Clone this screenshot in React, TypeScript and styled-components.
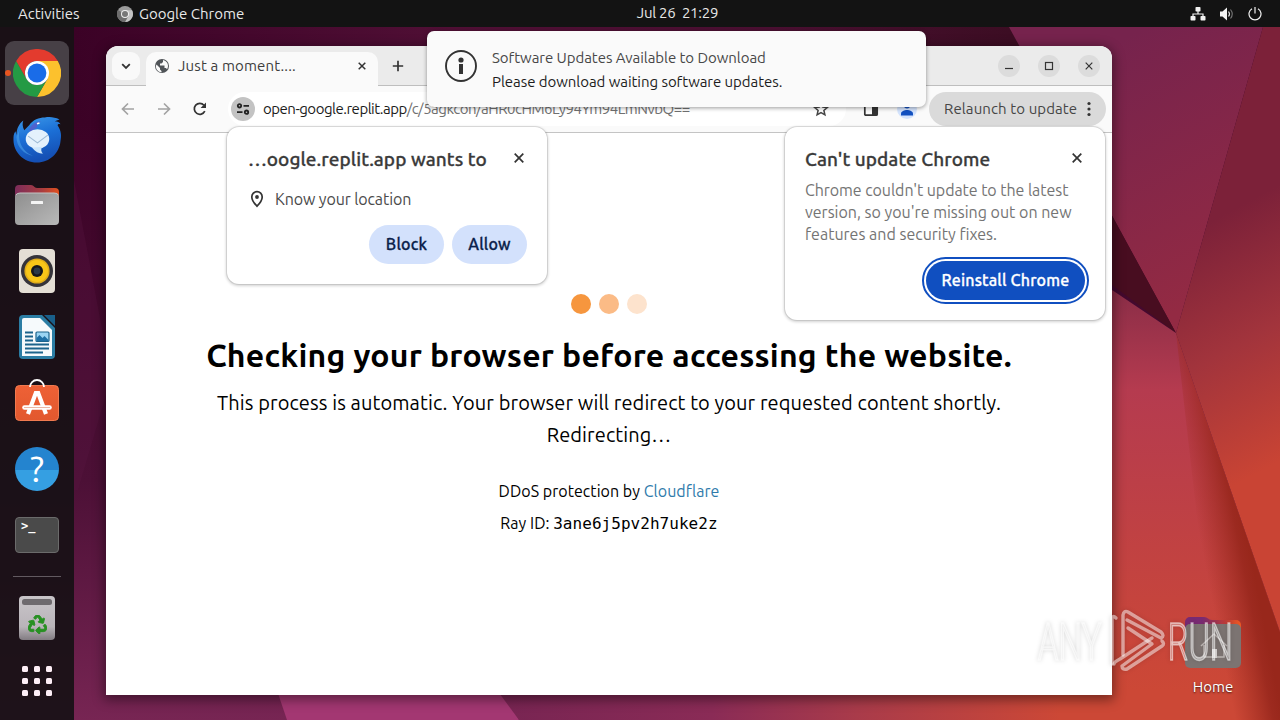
import type { ReactNode } from "react";
import { FaRecycle } from "react-icons/fa";
import styled, { createGlobalStyle } from "styled-components";

const GlobalStyle = createGlobalStyle`
  * {
    box-sizing: border-box;
  }

  body {
    margin: 0;
    overflow: hidden;
    font-family: Ubuntu, "Noto Sans", sans-serif;
  }
`;

/* ---------- wallpaper ---------- */

function Wallpaper() {
  return (
    <WallpaperSvg viewBox="0 0 1280 720" preserveAspectRatio="none">
      <defs>
        <linearGradient id="base" gradientUnits="userSpaceOnUse" x1="0" y1="120" x2="0" y2="720">
          <stop offset="0" stopColor="#3b0226" />
          <stop offset="0.6" stopColor="#4c1036" />
          <stop offset="1" stopColor="#772553" />
        </linearGradient>
        <linearGradient id="top" gradientUnits="userSpaceOnUse" x1="74" y1="0" x2="1010" y2="0">
          <stop offset="0" stopColor="#3b0226" />
          <stop offset="0.4" stopColor="#500f35" />
          <stop offset="0.75" stopColor="#4a0f31" />
          <stop offset="1" stopColor="#3c0d23" />
        </linearGradient>
        <linearGradient id="upper" gradientUnits="userSpaceOnUse" x1="1080" y1="60" x2="1200" y2="300">
          <stop offset="0" stopColor="#76234d" />
          <stop offset="1" stopColor="#932a43" />
        </linearGradient>
        <linearGradient id="right" gradientUnits="userSpaceOnUse" x1="1195" y1="230" x2="1310" y2="445">
          <stop offset="0" stopColor="#7c2139" />
          <stop offset="0.5" stopColor="#a2343c" />
          <stop offset="1" stopColor="#c94434" />
        </linearGradient>
        <linearGradient id="floor" gradientUnits="userSpaceOnUse" x1="480" y1="0" x2="1060" y2="0">
          <stop offset="0" stopColor="#762452" />
          <stop offset="0.4" stopColor="#8a2b56" />
          <stop offset="0.65" stopColor="#a93b4a" />
          <stop offset="1" stopColor="#cc4836" />
        </linearGradient>
        <linearGradient id="lower" gradientUnits="userSpaceOnUse" x1="0" y1="290" x2="0" y2="690">
          <stop offset="0" stopColor="#8a2d47" />
          <stop offset="0.25" stopColor="#b53b4f" />
          <stop offset="1" stopColor="#cc4836" />
        </linearGradient>
        <linearGradient id="fold" gradientUnits="userSpaceOnUse" x1="1204" y1="560" x2="1250" y2="551">
          <stop offset="0" stopColor="#a02c20" stopOpacity="0" />
          <stop offset="0.8" stopColor="#98271c" stopOpacity="0.9" />
          <stop offset="1" stopColor="#98271b" />
        </linearGradient>
      </defs>
      <rect width="1280" height="720" fill="url(#base)" />
      <path d="M74 27H1010L1060 120H74z" fill="url(#top)" />
      <path d="M74 180L106 350V395L78 490H74z" fill="#5a1743" opacity="0.3" />
      <path d="M260 640H480L519 720H287z" fill="#a33772" />
      <path d="M460 640H1176V720H519z" fill="url(#floor)" />
      <path d="M1009 27H1263L1176 333z" fill="url(#upper)" />
      <path d="M1263 27H1280V632L1176 333z" fill="url(#right)" />
      <path d="M1060 120L1176 333L1060 246z" fill="#480d20" />
      <path d="M1060 255L1176 333L1280 632V720H1060z" fill="url(#lower)" />
      <path d="M1176 333L1280 632V720H1220z" fill="url(#fold)" />
    </WallpaperSvg>
  );
}

/* ---------- dock icons ---------- */

const ChromeLogo = () => (
  <svg width="48" height="48" viewBox="0 0 48 48">
    <path d="M24 12H44.8A24 24 0 0 1 24 48L34.4 30z" fill="#fcc12d" />
    <path d="M34.4 30L24 48A24 24 0 0 1 3.2 12L13.6 30a12 12 0 0 0 20.8 0z" fill="#249a44" />
    <path d="M3.2 12A24 24 0 0 1 44.8 12H24a12 12 0 0 0-10.4 18z" fill="#e33b2e" />
    <circle cx="24" cy="24" r="12" fill="#fff" />
    <circle cx="24" cy="24" r="9.4" fill="#1a6ce8" />
  </svg>
);

const Thunderbird = () => (
  <svg width="50" height="48" viewBox="0 -1.5 50 49">
    <defs>
      <linearGradient id="bird" x1="0" y1="0" x2="0.3" y2="1">
        <stop offset="0" stopColor="#3d9bea" />
        <stop offset="0.5" stopColor="#1b6fd6" />
        <stop offset="1" stopColor="#1550b5" />
      </linearGradient>
    </defs>
    <path
      d="M11 4C10 7 10 10 12 14L17 9C21 3 27 1 33 1C39 0 43 1 48 3C46 4 44 4 43 5C46 5 48 6 49 8C47 7 46 8 46 9C50 15 50 20 49 25C48 37 38 47 25 47C11 47 1 36 1 24C1 20 1 18 3 15L4 19C4 12 7 7 11 4z"
      fill="url(#bird)"
    />
    <path d="M17 13C20 8 24 5 29 5C26 7 25 9 25 11L18 16z" fill="#6b4fc4" opacity="0.6" />
    <path d="M8 11C4 22 9 36 21 40C12 39 4 31 4 21z" fill="#5cb4f5" opacity="0.45" />
    <ellipse cx="25.500" cy="23" rx="12" ry="10" fill="#e4f1fc" />
    <path d="M16 20L25.500 27L36 19" stroke="#9dbad4" strokeWidth="1.1" fill="none" />
    <path d="M20 32C23 36 27 38 31 38C29 36 29 34 30 31z" fill="#cde6fb" />
    <path d="M25 7.500l2.500-.8" stroke="#fff" strokeWidth="1.6" />
  </svg>
);

const Files = () => (
  <svg width="46" height="42" viewBox="0 0 46 42">
    <defs>
      <linearGradient id="folderTab" x1="0" x2="1">
        <stop offset="0" stopColor="#7c2c5a" />
        <stop offset="0.6" stopColor="#a83c40" />
        <stop offset="1" stopColor="#e2511f" />
      </linearGradient>
      <linearGradient id="folderFront" x1="0" y1="0" x2="1" y2="1">
        <stop offset="0" stopColor="#8e8e8e" />
        <stop offset="1" stopColor="#b9b9b9" />
      </linearGradient>
    </defs>
    <path d="M1 16V5a4 4 0 0 1 4-4h12c3 0 3 3 6 3h18a4 4 0 0 1 4 4v8z" fill="url(#folderTab)" />
    <rect x="1" y="9" width="44" height="32" rx="4" fill="url(#folderFront)" />
    <path d="M2 11q1-2 4-2h34q4 0 4 2" stroke="#c3c3c3" fill="none" />
    <rect x="17" y="17" width="12" height="3" rx="0.5" fill="#f4f4f4" />
  </svg>
);

const Rhythmbox = () => (
  <svg width="38" height="46" viewBox="0 0 38 46">
    <rect x="1" y="1" width="36" height="44" rx="4" fill="#e4dfd5" />
    <circle cx="19" cy="23" r="16" fill="#35343a" />
    <circle cx="19" cy="23" r="12.6" fill="#e0ad19" />
    <circle cx="19" cy="23" r="11" fill="#f8c618" />
    <circle cx="19" cy="23" r="6" fill="#17181a" />
    <circle cx="19" cy="23" r="3.4" fill="#2a3848" />
  </svg>
);

const Writer = () => (
  <svg width="38" height="46" viewBox="0 0 38 46">
    <path d="M5 1H24L37 14V41a4 4 0 0 1-4 4H5a4 4 0 0 1-4-4V5a4 4 0 0 1 4-4z" fill="#2b7da4" />
    <path d="M26 1H37V12z" fill="#195f8a" />
    <path d="M6 4H22L34 16V42H4V6a2 2 0 0 1 2-2z" fill="#f6fafc" />
    <g stroke="#1c648c" strokeWidth="2">
      <path d="M7 18.5h8M7 22.5h8M7 26.5h8M7 30.5h24M7 34.5h24M7 38.5h18" />
    </g>
    <rect x="18" y="18" width="13" height="9.5" rx="1" fill="#9bd5f3" stroke="#1c648c" strokeWidth="1.2" />
    <path d="M18.5 27v-3l3-3 3 3 2-2 4 4v1z" fill="#1f70a5" />
  </svg>
);

const Software = () => (
  <svg width="46" height="50" viewBox="0 0 46 50">
    <defs>
      <linearGradient id="bag" x1="0" x2="0" y1="0" y2="1">
        <stop offset="0" stopColor="#ee6136" />
        <stop offset="1" stopColor="#e2582e" />
      </linearGradient>
    </defs>
    <rect x="1.500" y="7.500" width="43" height="35" rx="4" fill="url(#bag)" stroke="#f07a50" />
    <path d="M16 9a7 7 0 0 1 14 0" stroke="#fff" strokeWidth="1.8" fill="none" />
    <path d="M14 36L21.800 15h2.400L32 36" stroke="#fff" strokeWidth="4.2" fill="none" />
    <path d="M10.500 29.500h25" stroke="#fff" strokeWidth="4.600" strokeLinecap="round" />
    <path d="M10 29.500h26" stroke="#e9a58e" strokeWidth="0.8" />
  </svg>
);

const Help = () => (
  <HelpBadge>
    <span>?</span>
  </HelpBadge>
);

const Terminal = () => (
  <TerminalBox>
    <span>&gt;_</span>
  </TerminalBox>
);

const Trash = () => (
  <TrashBin>
    <TrashLid />
    <FaRecycle size={19} color="#279022" stroke="#279022" strokeWidth={26} />
  </TrashBin>
);

const AppGrid = () => (
  <svg width="30" height="30" viewBox="0 0 30 30" fill="#fdeef6">
    {[0, 12, 24].map((y) =>
      [0, 12, 24].map((x) => <rect key={`${x}-${y}`} x={x} y={y} width="6" height="6" rx="1.5" />)
    )}
  </svg>
);

/* ---------- small icons ---------- */

const CloseIcon = ({ size = 10, weight = 1.7 }: { size?: number; weight?: number }) => (
  <svg width={size} height={size} viewBox={`0 0 ${size} ${size}`}>
    <path d={`M.7 .7L${size - 0.7} ${size - 0.7}M${size - 0.7} .7L.7 ${size - 0.7}`} stroke="#333" strokeWidth={weight} />
  </svg>
);

const GlobeIcon = () => (
  <svg width="16" height="16" viewBox="0 0 16 16">
    <circle cx="8" cy="8" r="7" fill="#505458" />
    <path
      d="M2.500 6.500L6 10v1.500L7.500 13v1.200C4 14 1.800 11 1.900 8zM9 2v2L7.500 5.500H6V7.500h4.500V10h1.500l1 1.200A6 6 0 0 0 9 2z"
      fill="#fafafa"
    />
  </svg>
);

const ArrowIcon = ({ flip }: { flip?: boolean }) => (
  <svg width="14" height="14" viewBox="0 0 14 14" fill="none" stroke="#a3a3a3" strokeWidth="1.7">
    {flip ? <path d="M1 7h11M7 1.500L12.500 7L7 12.500" /> : <path d="M13 7H2M7 1.500L1.500 7L7 12.500" />}
  </svg>
);

const ReloadIcon = () => (
  <svg width="14" height="14" viewBox="0 0 14 14">
    <path d="M11.800 9.200A5.500 5.500 0 1 1 11 3.200" fill="none" stroke="#333" strokeWidth="1.700" />
    <path d="M13 .5V6H7.600z" fill="#333" />
  </svg>
);

const TuneIcon = () => (
  <svg width="14" height="12" viewBox="0 0 14 12" fill="none" stroke="#222" strokeWidth="1.800">
    <circle cx="3.500" cy="2.800" r="1.700" />
    <path d="M7.500 2.800H13M1 9.200H6.500" />
    <circle cx="10.500" cy="9.200" r="1.700" />
  </svg>
);

const PinIcon = () => (
  <svg width="14" height="18" viewBox="0 0 14 18">
    <path
      d="M7 1.700a5.200 5.200 0 0 0-5.200 5.200C1.800 10.800 7 16.200 7 16.200s5.200-5.400 5.200-9.300A5.200 5.200 0 0 0 7 1.700z"
      fill="none"
      stroke="#333"
      strokeWidth="1.700"
    />
    <circle cx="7" cy="7" r="1.900" fill="#333" />
  </svg>
);

/* ---------- app ---------- */

interface DockEntry {
  name: string;
  icon: ReactNode;
  active?: boolean;
}

const dockEntries: DockEntry[] = [
  { name: "chrome", icon: <ChromeLogo />, active: true },
  { name: "thunderbird", icon: <Thunderbird /> },
  { name: "files", icon: <Files /> },
  { name: "rhythmbox", icon: <Rhythmbox /> },
  { name: "writer", icon: <Writer /> },
  { name: "software", icon: <Software /> },
  { name: "help", icon: <Help /> },
  { name: "terminal", icon: <Terminal /> },
];

function MenuBar() {
  return (
    <TopBar>
      <Activities>Activities</Activities>
      <AppMenu>
        <svg width="16" height="16" viewBox="0 0 16 16">
          <circle cx="8" cy="8" r="8" fill="#9b9b9b" />
          <path d="M8 4.200h7A8 8 0 0 1 8 16l3.500-6z" fill="#c4c4c4" />
          <path d="M1 4A8 8 0 0 0 8 16l3.300-6z" fill="#6d6d6d" />
          <circle cx="8" cy="8" r="4" fill="#eee" />
          <circle cx="8" cy="8" r="3" fill="#777" />
        </svg>
        Google Chrome
      </AppMenu>
      <Clock>Jul 26&nbsp; 21:29</Clock>
      <Tray>
        <svg width="16" height="14" viewBox="0 0 16 14">
          <path d="M8 3v4M3 10V7h10v3" stroke="#f2f2f2" fill="none" strokeWidth="1.200" />
          <g fill="#f2f2f2">
            <rect x="5.500" y="0" width="5" height="4.500" rx="0.800" />
            <rect x="0.500" y="9" width="5" height="4.500" rx="0.800" />
            <rect x="10.500" y="9" width="5" height="4.500" rx="0.800" />
          </g>
        </svg>
        <svg width="16" height="14" viewBox="0 0 16 14">
          <path d="M1 4.500h2.500L8 .5v13L3.500 9.500H1z" fill="#f2f2f2" />
          <path d="M9.500 4.500q2 2.500 0 5" stroke="#ddd" fill="none" strokeWidth="1.200" />
          <path d="M11.500 2.500q3.500 4.500 0 9" stroke="#777" fill="none" strokeWidth="1.100" />
        </svg>
        <svg width="14" height="14" viewBox="0 0 14 14" stroke="#f2f2f2" fill="none" strokeWidth="1.200">
          <path d="M4 1.700a6 6 0 1 0 6 0M7 0v6.500" />
        </svg>
      </Tray>
    </TopBar>
  );
}

function BrowserWindow() {
  return (
    <Window>
      <TabStrip>
        <TabSearch>
          <svg width="10" height="7" viewBox="0 0 10 7">
            <path d="M1.200 1.200L5 5L8.800 1.200" stroke="#333" strokeWidth="1.800" fill="none" />
          </svg>
        </TabSearch>
        <Tab>
          <GlobeIcon />
          <TabTitle>Just a moment....</TabTitle>
          <CloseIcon size={8} weight={1.5} />
        </Tab>
        <NewTab>
          <svg width="12" height="12" viewBox="0 0 12 12">
            <path d="M6 .8V11.200M.8 6H11.200" stroke="#333" strokeWidth="1.700" />
          </svg>
        </NewTab>
        <WindowControls>
          <ControlButton>
            <svg width="10" height="10" viewBox="0 0 10 10">
              <path d="M1 7.500h8" stroke="#333" strokeWidth="1.200" />
            </svg>
          </ControlButton>
          <ControlButton>
            <svg width="10" height="10" viewBox="0 0 10 10">
              <rect x="1.500" y="1.500" width="7" height="7" stroke="#333" strokeWidth="1.200" fill="none" />
            </svg>
          </ControlButton>
          <ControlButton>
            <CloseIcon size={8} weight={1.2} />
          </ControlButton>
        </WindowControls>
      </TabStrip>
      <Toolbar>
        <NavButtons>
          <ArrowIcon />
          <ArrowIcon flip />
          <ReloadIcon />
        </NavButtons>
        <Omnibox>
          <SiteInfo>
            <TuneIcon />
          </SiteInfo>
          <Host>open-google.replit.app</Host>
          <Path>/c/5agkcoh/aHR0cHM6Ly94Ym94LmNvbQ==</Path>
          <svg width="16" height="16" viewBox="0 0 16 16">
            <path
              d="M8 1.800l1.800 4.200 4.500.4-3.400 3 1 4.400L8 11.500l-3.900 2.300 1-4.400-3.400-3 4.500-.4z"
              fill="none"
              stroke="#444"
              strokeWidth="1.500"
            />
          </svg>
        </Omnibox>
        <SidePanel>
          <svg width="16" height="16" viewBox="0 0 16 16">
            <rect x="1.800" y="1.800" width="12.400" height="12.400" rx="1" fill="none" stroke="#333" strokeWidth="1.700" />
            <path d="M9 2h5v12H9z" fill="#333" />
          </svg>
        </SidePanel>
        <Profile>
          <svg width="12" height="14" viewBox="0 0 12 14" fill="#1250c0">
            <circle cx="6" cy="3.500" r="3" />
            <path d="M0 13.500v-2C0 9.500 3.500 8 6 8s6 1.500 6 3.500v2z" />
          </svg>
        </Profile>
        <Relaunch>
          Relaunch to update
          <svg width="4" height="16" viewBox="0 0 4 16" fill="#333">
            <circle cx="2" cy="2.500" r="1.600" />
            <circle cx="2" cy="8" r="1.600" />
            <circle cx="2" cy="13.500" r="1.600" />
          </svg>
        </Relaunch>
      </Toolbar>
      <Page>
        <Dots>
          <Dot $color="#f6963e" />
          <Dot $color="#fbbb86" />
          <Dot $color="#fde3cd" />
        </Dots>
        <Heading>Checking your browser before accessing the website.</Heading>
        <Message>
          This process is automatic. Your browser will redirect to your requested content shortly.
        </Message>
        <Message>Redirecting…</Message>
        <Footnotes>
          <Footnote>
            DDoS protection by <a>Cloudflare</a>
          </Footnote>
          <Footnote>
            Ray ID: <code>3ane6j5pv2h7uke2z</code>
          </Footnote>
        </Footnotes>
      </Page>
    </Window>
  );
}

function PermissionPrompt() {
  return (
    <PermissionBubble>
      <BubbleHeader>
        <BubbleTitle>…oogle.replit.app wants to</BubbleTitle>
        <CloseIcon />
      </BubbleHeader>
      <PermissionRow>
        <PinIcon />
        Know your location
      </PermissionRow>
      <Actions>
        <TonalButton>Block</TonalButton>
        <TonalButton>Allow</TonalButton>
      </Actions>
    </PermissionBubble>
  );
}

function UpdatePrompt() {
  return (
    <UpdateBubble>
      <BubbleHeader>
        <BubbleTitle>Can't update Chrome</BubbleTitle>
        <CloseIcon />
      </BubbleHeader>
      <UpdateText>
        <span>Chrome couldn't update to the latest</span>
        <span>version, so you're missing out on new</span>
        <span>features and security fixes.</span>
      </UpdateText>
      <Actions>
        <PrimaryButton>Reinstall Chrome</PrimaryButton>
      </Actions>
    </UpdateBubble>
  );
}

function Notification() {
  return (
    <Toast>
      <svg width="34" height="34" viewBox="0 0 34 34">
        <circle cx="17" cy="17" r="15" fill="none" stroke="#333" strokeWidth="1.900" />
        <circle cx="17" cy="11" r="2.600" fill="#333" />
        <rect x="15" y="15" width="4" height="10" fill="#333" />
      </svg>
      <ToastText>
        <ToastTitle>Software Updates Available to Download</ToastTitle>
        <ToastBody>Please download waiting software updates.</ToastBody>
      </ToastText>
    </Toast>
  );
}

function HomeFolder() {
  return (
    <HomeItem>
      <svg width="58" height="54" viewBox="0 0 58 54">
        <defs>
          <linearGradient id="homeTab" x1="0" x2="1">
            <stop offset="0.3" stopColor="#782a72" />
            <stop offset="0.7" stopColor="#b83a3c" />
            <stop offset="1" stopColor="#ee5a22" />
          </linearGradient>
        </defs>
        <path d="M1 18V6a5 5 0 0 1 5-5h14c4 0 4 3 8 3h24a5 5 0 0 1 5 5v9z" fill="url(#homeTab)" />
        <rect x="1" y="8" width="56" height="44" rx="5" fill="#7c7472" />
        <path d="M17 30L30 18L43 30M20 29v12h20V29" stroke="#bcb6b4" strokeWidth="1.600" fill="none" />
        <rect x="28" y="33" width="5" height="9" fill="#d8d4d3" />
      </svg>
      <span>Home</span>
    </HomeItem>
  );
}

function Watermark() {
  return (
    <WatermarkSvg width="240" height="90" viewBox="0 0 240 90">
      <g fill="none" stroke="#fff" strokeOpacity="0.5" strokeWidth="3.400" strokeLinejoin="round" strokeLinecap="round">
        <path d="M82 59V13q1-3 4 0" />
        <path d="M93 50V10q1-5 5-3L131 27q4 4 0 6L97 15" />
        <path d="M132 36q3 3 0 5L97 64q-5 1-5-3L122 39L98 23" />
        <path d="M122 33L90 54q-6 3-6 5" />
      </g>
      <g
        transform="scale(0.65 1)"
        fontFamily="Roboto, sans-serif"
        fontSize="52"
        fontWeight="300"
        fill="#fff"
        fillOpacity="0.35"
        stroke="#fff"
        strokeOpacity="0.55"
        strokeWidth="1.600"
      >
        <text x="12" y="55" textLength="98" lengthAdjust="spacingAndGlyphs">
          ANY
        </text>
        <text x="212" y="55" textLength="100" lengthAdjust="spacingAndGlyphs">
          RUN
        </text>
      </g>
    </WatermarkSvg>
  );
}

function App() {
  return (
    <Desktop>
      <GlobalStyle />
      <Wallpaper />
      <MenuBar />
      <Workspace>
        <Dock>
          {dockEntries.map((entry) => (
            <DockItem key={entry.name}>
              <DockTile $active={entry.active}>{entry.icon}</DockTile>
            </DockItem>
          ))}
          <DockSeparator />
          <DockItem>
            <Trash />
          </DockItem>
          <GridItem>
            <AppGrid />
          </GridItem>
        </Dock>
      </Workspace>
      <HomeFolder />
      <BrowserWindow />
      <PermissionPrompt />
      <UpdatePrompt />
      <Notification />
      <Watermark />
    </Desktop>
  );
}

const Desktop = styled.div`
  position: relative;
  display: flex;
  flex-direction: column;
  width: 1280px;
  height: 720px;
  overflow: hidden;
  background: #3b0226;
`;

const WallpaperSvg = styled.svg`
  position: absolute;
  inset: 0;
  width: 1280px;
  height: 720px;
`;

const TopBar = styled.header`
  position: relative;
  display: grid;
  grid-template-columns: 117px 510px 101px 1fr;
  align-items: center;
  height: 27px;
  background: #131313;
  color: #e8e8e8;
  font-size: 15px;
  line-height: 20px;
`;

const Activities = styled.span`
  padding-left: 18px;
`;

const AppMenu = styled.div`
  display: flex;
  align-items: center;
  gap: 6px;
`;

const Clock = styled.span`
  padding-bottom: 1px;
  text-align: center;
  white-space: nowrap;
  letter-spacing: -0.25px;
`;

const Tray = styled.div`
  display: flex;
  align-items: center;
  justify-content: flex-end;
  gap: 13px;
  padding-right: 18px;
`;

const Workspace = styled.div`
  position: relative;
  display: flex;
  flex: 1;
`;

const Dock = styled.nav`
  display: flex;
  flex-direction: column;
  align-items: center;
  width: 74px;
  height: 693px;
  padding-top: 13px;
  background: rgba(24, 17, 21, 0.93);
`;

const DockItem = styled.div`
  display: flex;
  align-items: center;
  justify-content: center;
  width: 74px;
  height: 66px;
`;

const DockTile = styled.div<{ $active?: boolean }>`
  position: relative;
  display: flex;
  align-items: center;
  justify-content: center;
  width: 64px;
  height: 64px;
  border-radius: 9px;
  background: ${({ $active }) => ($active ? "#474046" : "transparent")};

  &::before {
    content: "";
    position: absolute;
    left: 0;
    width: 6px;
    height: 6px;
    border-radius: 50%;
    background: ${({ $active }) => ($active ? "#e95420" : "transparent")};
  }
`;

const DockSeparator = styled.div`
  width: 48px;
  height: 1px;
  margin: 8px 0;
  background: #625a60;
`;

const GridItem = styled(DockItem)`
  height: 60px;
`;

const HelpBadge = styled.div`
  display: flex;
  align-items: center;
  justify-content: center;
  width: 44px;
  height: 44px;
  border-radius: 50%;
  background: linear-gradient(#2484cf 0 52%, #359fe2 52%);
  color: #fff;
  font-size: 36px;
  line-height: 44px;
`;

const TerminalBox = styled.div`
  width: 44px;
  height: 36px;
  padding: 0 5px;
  border: 1px solid #6b6b6b;
  border-radius: 4px;
  background: #4a4a4a;
  color: #fff;
  font: bold 12px/16px "DejaVu Sans Mono", monospace;
`;

const TrashBin = styled.div`
  display: flex;
  flex-direction: column;
  align-items: center;
  justify-content: space-between;
  width: 36px;
  height: 44px;
  padding: 3px 0 6px;
  border-radius: 4px;
  background: linear-gradient(#c9c5c9, #b9b4b9 70%, #827c82);
`;

const TrashLid = styled.div`
  width: 30px;
  height: 6px;
  border-radius: 2.5px;
  background: #6e6a6e;
`;

const Window = styled.main`
  position: absolute;
  left: 106px;
  top: 46px;
  display: flex;
  flex-direction: column;
  width: 1006px;
  height: 649px;
  border-radius: 12px 12px 0 0;
  background: #fff;
  box-shadow: 0 3px 12px 2px rgba(0, 0, 0, 0.42);
`;

const TabStrip = styled.div`
  display: flex;
  height: 40px;
  padding: 6px 12px 0 6px;
  border-bottom: 1px solid #bebebe;
  border-radius: 12px 12px 0 0;
  background: #ebebeb;
`;

const TabSearch = styled.div`
  display: flex;
  align-items: center;
  justify-content: center;
  width: 28px;
  height: 28px;
  border-radius: 9px;
  background: #f9f9f9;
`;

const Tab = styled.div`
  display: flex;
  align-items: center;
  width: 232px;
  height: 34px;
  margin-left: 6px;
  padding: 0 12px 6px 8px;
  border-radius: 10px 10px 0 0;
  background: #fafafa;
`;

const TabTitle = styled.span`
  flex: 1;
  padding-left: 8px;
  color: #3d3d3d;
  font-size: 15px;
  line-height: 20px;
  letter-spacing: 0.15px;
`;

const NewTab = styled.div`
  display: flex;
  align-items: center;
  justify-content: center;
  width: 28px;
  height: 28px;
  margin-left: 6px;
`;

const WindowControls = styled.div`
  display: flex;
  gap: 18px;
  margin-left: auto;
  padding-top: 3px;
`;

const ControlButton = styled.div`
  display: flex;
  align-items: center;
  justify-content: center;
  width: 22px;
  height: 22px;
  border-radius: 50%;
  background: #dcdcdc;
`;

const Toolbar = styled.div`
  display: flex;
  align-items: center;
  height: 47px;
  padding-right: 6px;
  border-bottom: 1px solid #c4c4c4;
  background: #fafafa;
`;

const NavButtons = styled.div`
  display: flex;
  align-items: center;
  gap: 22px;
  width: 122px;
  padding-left: 15px;
`;

const Omnibox = styled.div`
  display: flex;
  align-items: center;
  width: 618px;
  height: 34px;
  padding: 0 17px 0 3px;
  border-radius: 17px;
  background: #fff;
  font-size: 15px;
  line-height: 20px;
  letter-spacing: -0.5px;
`;

const SiteInfo = styled.div`
  display: flex;
  align-items: center;
  justify-content: center;
  width: 24px;
  height: 24px;
  margin-right: 8px;
  border-radius: 50%;
  background: #c3c3c3;
`;

const Host = styled.span`
  color: #1c1c1c;
`;

const Path = styled.span`
  flex: 1;
  color: #707070;
`;

const SidePanel = styled.div`
  display: flex;
  width: 16px;
  margin-left: 17px;
`;

const Profile = styled.div`
  display: flex;
  align-items: flex-end;
  justify-content: center;
  width: 20px;
  height: 20px;
  margin-left: 18px;
  padding-bottom: 3px;
  border-radius: 50%;
  background: #d3e3fd;
`;

const Relaunch = styled.div`
  display: flex;
  align-items: center;
  justify-content: space-between;
  width: 177px;
  height: 34px;
  margin-left: auto;
  padding: 0 15px;
  border-radius: 17px;
  background: #dadada;
  color: #464646;
  font-size: 15px;
  line-height: 20px;
  letter-spacing: 0.1px;
  white-space: nowrap;
`;

const Page = styled.section`
  display: flex;
  flex-direction: column;
  align-items: center;
  padding-top: 161px;
  color: #000;
  white-space: nowrap;
`;

const Dots = styled.div`
  display: flex;
  gap: 8px;
`;

const Dot = styled.i<{ $color: string }>`
  width: 20px;
  height: 20px;
  border-radius: 50%;
  background: ${({ $color }) => $color};
`;

const Heading = styled.h1`
  margin: 21px 0 12px;
  font-size: 32px;
  font-weight: 700;
  line-height: 40px;
  letter-spacing: 0.22px;
`;

const Message = styled.p`
  margin: 0;
  font-size: 20px;
  line-height: 32px;
  letter-spacing: 0.1px;
`;

const Footnotes = styled.div`
  margin-top: 24px;
  font-size: 16px;
  line-height: 32px;
  text-align: center;

  a {
    color: #2f7bab;
  }

  code {
    font-family: "DejaVu Sans Mono", monospace;
    font-size: 16px;
  }
`;

const Footnote = styled.div`
  height: 32px;
  letter-spacing: 0.04px;
`;

const Bubble = styled.section`
  position: absolute;
  top: 127px;
  border-radius: 12px;
  background: #fff;
  box-shadow: 0 0 0 1px rgba(0, 0, 0, 0.08), 0 1px 3px 1px rgba(0, 0, 0, 0.18);
  white-space: nowrap;
`;

const PermissionBubble = styled(Bubble)`
  left: 227px;
  width: 320px;
  height: 157px;
  padding: 20px 20px 0 21px;
`;

const UpdateBubble = styled(Bubble)`
  left: 785px;
  width: 320px;
  height: 193px;
  padding: 20px 20px 0;
`;

const BubbleHeader = styled.div`
  display: flex;
  align-items: center;
  justify-content: space-between;
  height: 24px;
  padding-right: 3px;

  svg {
    margin-bottom: 2px;
  }
`;

const BubbleTitle = styled.h2`
  margin: 0;
  color: #3a3a3a;
  font-size: 19px;
  font-weight: 500;
  letter-spacing: 0.06px;
  -webkit-text-stroke: 0.3px #3a3a3a;
`;

const PermissionRow = styled.div`
  display: flex;
  align-items: center;
  gap: 11px;
  height: 24px;
  margin: 16px 0 14px 2px;
  color: #4a4a4a;
  font-size: 16px;
  letter-spacing: -0.1px;

  svg {
    margin-bottom: 1px;
  }
`;

const Actions = styled.div`
  display: flex;
  justify-content: flex-end;
  gap: 8px;
`;

const TonalButton = styled.button`
  width: 75px;
  height: 39px;
  padding: 0 0 2px;
  border: none;
  border-radius: 20px;
  background: #d3e1fc;
  color: #0b1f4b;
  font: 500 16px/36px Ubuntu, "Noto Sans", sans-serif;
  letter-spacing: 0.18px;
  -webkit-text-stroke: 0.3px currentColor;
`;

const PrimaryButton = styled(TonalButton)`
  width: 159px;
  background: #104fc0;
  color: #fff;
  outline: 2px solid #104fc0;
  outline-offset: 2px;
`;

const UpdateText = styled.p`
  display: flex;
  flex-direction: column;
  margin: 8px 0 16px;
  color: #747474;
  font-size: 16px;
  line-height: 22px;

  span:first-child {
    letter-spacing: -0.06px;
  }
`;

const Toast = styled.aside`
  position: absolute;
  left: 427px;
  top: 31px;
  display: flex;
  width: 499px;
  height: 76px;
  padding: 18px 17px;
  border-radius: 7px;
  background: #fafafa;
  box-shadow: 0 1px 4px rgba(0, 0, 0, 0.4);
`;

const ToastText = styled.div`
  display: flex;
  flex-direction: column;
  padding-left: 14px;
  margin-top: -3px;
  font-size: 15px;
  line-height: 24px;
  letter-spacing: -0.05px;
  white-space: nowrap;
`;

const ToastTitle = styled.span`
  color: #484848;
`;

const ToastBody = styled.span`
  color: #1d1d1d;
`;

const HomeItem = styled.div`
  position: absolute;
  left: 1173px;
  top: 616px;
  display: flex;
  flex-direction: column;
  align-items: center;
  gap: 7px;
  width: 80px;
  color: #fff;
  font-size: 15px;
  line-height: 20px;
  text-shadow: 0 1px 2px rgba(0, 0, 0, 0.7);
`;

const WatermarkSvg = styled.svg`
  position: absolute;
  left: 1030px;
  top: 605px;
  filter: drop-shadow(0 0 2px rgba(0, 0, 0, 0.25));
`;

export default App;
